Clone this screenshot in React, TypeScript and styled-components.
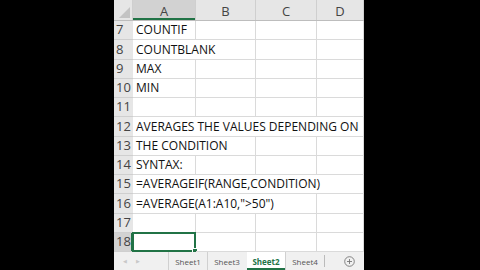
import styled, { createGlobalStyle } from 'styled-components';

const GlobalStyle = createGlobalStyle`
  *, *::before, *::after {
    box-sizing: border-box;
  }
  html, body {
    margin: 0;
    padding: 0;
    background: #000;
  }
  body {
    font-family: "Open Sans", "Noto Sans", sans-serif;
  }
`;

const COLUMNS = ['A', 'B', 'C', 'D'];

const ROWS: { n: number; text?: string; span?: number }[] = [
  { n: 7, text: 'COUNTIF', span: 1 },
  { n: 8, text: 'COUNTBLANK', span: 2 },
  { n: 9, text: 'MAX', span: 1 },
  { n: 10, text: 'MIN', span: 1 },
  { n: 11 },
  { n: 12, text: 'AVERAGES THE VALUES DEPENDING ON', span: 4 },
  { n: 13, text: 'THE CONDITION', span: 2 },
  { n: 14, text: 'SYNTAX:', span: 1 },
  { n: 15, text: '=AVERAGEIF(RANGE,CONDITION)', span: 4 },
  { n: 16, text: '=AVERAGE(A1:A10,">50")', span: 3 },
  { n: 17 },
  { n: 18 },
];

const SELECTED_ROW = 18;

const TABS = ['Sheet1', 'Sheet3', 'Sheet2', 'Sheet4'];
const ACTIVE_TAB = 'Sheet2';

const App = () => {
  return (
    <_Frame>
      <GlobalStyle />
      <_Side $width={114} />
      <_Sheet>
        <_Grid>
          <_HeaderRow>
            <_Corner>
              <svg width="12" height="12" viewBox="0 0 12 12">
                <polygon points="12,1 12,12 1,12" fill="#c3c3c3" />
              </svg>
            </_Corner>
            {COLUMNS.map((c) => (
              <_ColHead key={c} $selected={c === 'A'}>
                {c}
              </_ColHead>
            ))}
          </_HeaderRow>
          {ROWS.map((row) => {
            const selected = row.n === SELECTED_ROW;
            const span = row.text ? row.span ?? 1 : 1;
            const rest = 4 - span;
            return (
              <_Row key={row.n}>
                <_RowHead $selected={selected}>{row.n}</_RowHead>
                {selected ? (
                  <_Cell $span={1}>
                    <_Selection>
                      <_Handle />
                    </_Selection>
                  </_Cell>
                ) : (
                  <_Cell $span={span}>{row.text}</_Cell>
                )}
                {Array.from({ length: rest }).map((_, i) => (
                  <_Cell key={i} $span={1} />
                ))}
              </_Row>
            );
          })}
        </_Grid>
        <_TabBar>
          <_Arrows>
            <span>◀</span>
            <span>▶</span>
          </_Arrows>
          {TABS.map((t) => (
            <_Tab key={t} $active={t === ACTIVE_TAB}>
              {t}
            </_Tab>
          ))}
          <_TabDivider />
          <_AddButton>
            <svg width="11" height="11" viewBox="0 0 11 11">
              <circle cx="5.5" cy="5.5" r="4.8" fill="none" stroke="#777" strokeWidth="0.9" />
              <path d="M5.5 3v5M3 5.5h5" stroke="#777" strokeWidth="0.9" />
            </svg>
          </_AddButton>
        </_TabBar>
      </_Sheet>
      <_Side $width={116} />
    </_Frame>
  );
};

export default App;

const _Frame = styled.div`
  width: 480px;
  height: 270px;
  display: flex;
  background: #000;
  overflow: hidden;
`;

const _Side = styled.div<{ $width: number }>`
  width: ${({ $width }) => $width}px;
  flex-shrink: 0;
  background: #000;
`;

const _Sheet = styled.div`
  width: 250px;
  flex-shrink: 0;
  display: flex;
  flex-direction: column;
  background: #fff;
`;

const _Grid = styled.div`
  height: 252px;
  flex-shrink: 0;
  display: grid;
  grid-template-rows: 21px repeat(12, minmax(0, 1fr));
  overflow: hidden;
`;

const COLS = '19px 63px 60px 61px 47px';

const _HeaderRow = styled.div`
  display: grid;
  grid-template-columns: ${COLS};
  min-height: 0;
  background: #e6e6e6;
  border-bottom: 1px solid #bdbdbd;
`;

const _Corner = styled.div`
  display: flex;
  align-items: flex-end;
  justify-content: flex-end;
  padding: 0 2px 2px 0;
  border-right: 1px solid #cfcfcf;
`;

const _ColHead = styled.div<{ $selected: boolean }>`
  display: flex;
  align-items: center;
  justify-content: center;
  padding-top: 2px;
  font-size: 13px;
  line-height: 1;
  color: #444;
  background: ${({ $selected }) => ($selected ? '#d2d2d2' : 'transparent')};
  border-right: 1px solid #cfcfcf;
  box-shadow: ${({ $selected }) => ($selected ? 'inset 0 -2px 0 #217346' : 'none')};
`;

const _Row = styled.div`
  display: grid;
  grid-template-columns: ${COLS};
  min-height: 0;
`;

const _RowHead = styled.div<{ $selected: boolean }>`
  display: flex;
  align-items: flex-end;
  padding: 0 0 3px 2px;
  font-size: 13px;
  line-height: 1;
  color: #444;
  background: ${({ $selected }) => ($selected ? '#d2d2d2' : '#e6e6e6')};
  border-bottom: 1px solid #cfcfcf;
  box-shadow: ${({ $selected }) => ($selected ? 'inset -2px 0 0 #217346' : 'none')};
`;

const _Cell = styled.div<{ $span: number }>`
  grid-column: span ${({ $span }) => $span};
  position: relative;
  display: flex;
  align-items: flex-end;
  padding: 0 0 3px 3px;
  font-size: 12px;
  line-height: 1;
  color: #111;
  white-space: nowrap;
  border-right: 1px solid #dadada;
  border-bottom: 1px solid #dadada;
`;

const _Selection = styled.div`
  position: absolute;
  inset: -1px -1px -1px -1px;
  border: 2px solid #217346;
`;

const _Handle = styled.div`
  position: absolute;
  right: -4px;
  bottom: -4px;
  width: 6px;
  height: 6px;
  background: #217346;
  border: 1px solid #fff;
`;

const _TabBar = styled.div`
  height: 18px;
  flex-shrink: 0;
  display: flex;
  align-items: stretch;
  background: #f0f0f0;
  font-size: 8px;
  color: #555;
`;

const _Arrows = styled.div`
  width: 54px;
  flex-shrink: 0;
  display: flex;
  align-items: center;
  gap: 9px;
  padding-left: 9px;
  font-size: 5px;
  color: #c8c8c8;
`;

const _Tab = styled.div<{ $active: boolean }>`
  width: 39px;
  flex-shrink: 0;
  display: flex;
  align-items: center;
  justify-content: center;
  border-left: 1px solid ${({ $active }) => ($active ? '#f0f0f0' : '#d0d0d0')};
  background: ${({ $active }) => ($active ? '#fff' : 'transparent')};
  color: ${({ $active }) => ($active ? '#217346' : '#555')};
  font-weight: ${({ $active }) => ($active ? 700 : 400)};
  box-shadow: ${({ $active }) => ($active ? 'inset 0 -2px 0 #217346' : 'none')};
`;

const _TabDivider = styled.div`
  width: 1px;
  flex-shrink: 0;
  margin: 3px 0;
  background: #bbb;
`;

const _AddButton = styled.div`
  display: flex;
  align-items: center;
  padding-left: 19px;
`;
